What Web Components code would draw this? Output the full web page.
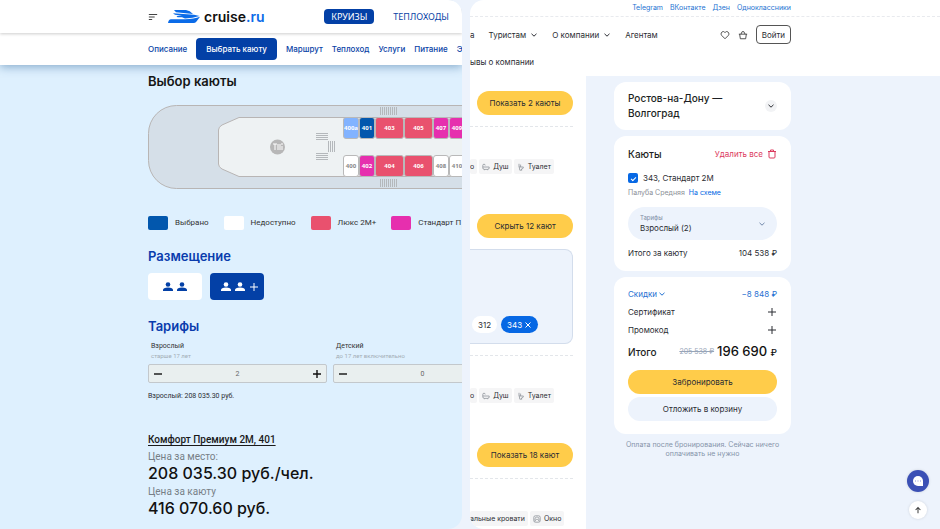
<!DOCTYPE html>
<html lang="ru">
<head>
<meta charset="utf-8">
<meta name="viewport" content="width=device-width, initial-scale=1">
<title>Выбор каюты</title>
<style>
  html { height: 100%; }
  body {
    margin: 0;
    min-height: 100%;
    display: grid;
    grid-template-columns: 462fr 470fr;
    gap: 8px;
    background: #edf3fc;
    font-family: Inter, "Liberation Sans", sans-serif;
    font-size: 8px;
    line-height: 12px;
    color: #2b2d33;
    overflow: hidden;
  }
</style>
</head>
<body>
<cruise-page></cruise-page>
<booking-page></booking-page>

<script>
// every element: open shadow root filled from a template
function define(tag, html) {
  const tpl = document.createElement('template');
  tpl.innerHTML = html;
  customElements.define(tag, class extends HTMLElement {
    constructor() {
      super();
      this.attachShadow({mode:'open'}).appendChild(tpl.content.cloneNode(true));
    }
  });
}

const ICONS = {
  menu: ['0 0 12 8', '<path d="M1 1h10M1 4h7M1 7h4" stroke-width="1.3"/>'],
  down: ['0 0 8 8', '<path d="M1.5 2.8 4 5.2l2.5-2.4"/>'],
  heart: ['0 0 12 12', '<path d="M6 10.500 2 6.500C-.3 4 3.500-.2 6 3 8.500-.2 12.300 4 10 6.500z"/>'],
  basket: ['0 0 12 12', '<path d="M1 5h10M2 5l.8 5.500h6.400L10 5M3.500 5 5 2h2l1.500 3"/>'],
  trash: ['0 0 10 10', '<path d="M1 2.500h8M3.500 2.500V1h3v1.500M2 2.500V8q0 1 1 1h4q1 0 1-1V2.500"/>'],
  plus: ['0 0 10 10', '<path d="M5 1v8M1 5h8"/>'],
  minus: ['0 0 10 10', '<path d="M1 5h8"/>'],
  close: ['0 0 8 8', '<path d="m1.500 1.500 5 5m0-5-5 5"/>'],
  up: ['0 0 10 10', '<path d="M5 9V2M2 5l3-3 3 3" stroke-width="1.3"/>'],
  shower: ['0 0 10 10', '<path d="M1 5h8v1q0 2-2 2H3Q1 8 1 6V3q0-1.500 1.500-1.500T4 3M3 8v1m4-1v1" stroke-width=".9"/>'],
  toilet: ['0 0 10 10', '<path d="M2.500 1v4H8q0 2.500-2.500 2.500L6 9H3.500L3 6 2.500 5M4.500 5V2" stroke-width=".9"/>'],
  window: ['0 0 10 10', '<rect x="1" y="1" width="8" height="8" rx="2" stroke-width=".9"/><path d="M2.500 8V5q0-2.500 2.500-2.500T7.500 5v3M2.500 7 5 5l2.500 2" stroke-width=".8"/>'],
  person: ['0 0 10 10', '<circle cx="5" cy="2.500" r="2.300" fill="currentColor" stroke="none"/><path d="M0 9V8Q0 5.500 5 5.500T10 8v1z" fill="currentColor" stroke="none"/>'],
  chat: ['0 0 12 12', '<path d="M6 1a5 5 0 1 0 0 10h5V6A5 5 0 0 0 6 1z" fill="currentColor" stroke="none"/><path d="M3 6h1m1.500 0h1m1.500 0h1" stroke="#8793dc"/>']
};

class AppIcon extends HTMLElement {
  constructor() {
    super();
    this.attachShadow({mode:'open'});
  }
  connectedCallback() {
    const [box, shape] = ICONS[this.getAttribute('name')];
    this.shadowRoot.innerHTML = `
      <style>
        :host { display: inline-block; width: 10px; height: 10px; flex: none; }
        svg { display: block; width: 100%; height: 100%; stroke-width: var(--stroke, 1); }
      </style>
      <svg viewBox="${box}" fill="none" stroke="currentColor" aria-hidden="true">${shape}</svg>`;
  }
}
customElements.define('app-icon', AppIcon);

/* ---------- cruise page ---------- */

define('cruise-header', `
  <style>
    :host {
      display: flex;
      align-items: center;
      height: 33px;
      padding-left: 148px;
      background: #fff;
      box-shadow: 0 1px 3px #0003;
      position: relative;
      white-space: nowrap;
    }
    button { border: 0; padding: 0; background: none; color: #444; display: flex; }
    button app-icon { width: 10px; height: 8px; }
    .logo {
      display: flex;
      align-items: center;
      gap: 4px;
      margin-left: 10px;
      font: 600 14px/20px Inter, sans-serif;
      color: #111;
      text-decoration: none;
    }
    .logo svg { width: 32px; height: 13px; }
    .logo b { font-weight: 600; color: #0b6be8; }
    nav { display: flex; gap: 12px; margin-left: auto; padding-right: 6px; }
    nav a {
      font: 9px/15px "Noto Sans", sans-serif;
      padding: 0 7px;
      border-radius: 4px;
      color: #0a43a6;
      text-decoration: none;
    }
    nav a.on { background: #0340a6; color: #fff; }
  </style>
  <button type="button" aria-label="Меню"><app-icon name="menu"></app-icon></button>
  <a class="logo" href="#">
    <svg viewBox="0 0 32 13" fill="#0b6be8" aria-hidden="true">
      <path d="M0 13Q.5 9.500 3 9.300H17Q26 9 32 6.800L28.500 11.500Q27.300 13 25.500 13z"/>
      <path d="M6 0H18Q22 .5 25 4L8 2.200z"/>
      <path d="M5 3.200 26 4.700 31.500 6Q25 8.400 17 8.500L14 7.200H9.500L8.500 6 14 5.600 7 4.800z"/>
    </svg>
    <span>cruise<b>.ru</b></span>
  </a>
  <nav><a class="on" href="#">КРУИЗЫ</a><a href="#">ТЕПЛОХОДЫ</a></nav>
`);

define('cruise-nav', `
  <style>
    :host {
      display: flex;
      align-items: center;
      gap: 9px;
      height: 32px;
      padding-left: 148px;
      background: #fff;
      box-shadow: 0 2px 10px #3b6f9f88;
      white-space: nowrap;
    }
    a { color: #0a43a6; text-decoration: none; font: 500 8px/12px Inter, sans-serif; }
    a.on {
      background: #0340a6;
      color: #fff;
      border-radius: 4px;
      padding: 5px 10px;
    }
  </style>
  <a href="#">Описание</a>
  <a class="on" href="#">Выбрать каюту</a>
  <a href="#">Маршрут</a>
  <a href="#">Теплоход</a>
  <a href="#">Услуги</a>
  <a href="#">Питание</a>
  <a href="#">Э</a>
`);

define('deck-plan', `
  <style>
    :host { display: grid; height: 84px; overflow: hidden; }
    svg, .cabins { grid-area: 1 / 1; }
    svg { width: 100%; height: 84px; }
    .cabins {
      display: grid;
      grid-template-columns: 16px 16px 29px 29px 16px 16px;
      grid-template-rows: 22px 22px;
      row-gap: 16px;
      padding: 12px 0 0 195px;
      z-index: 1;
    }
    button {
      border: 1px solid #b9b9b9;
      border-radius: 3px;
      padding: 0;
      background: #fff;
      color: #888;
      font: 700 6px/8px "Noto Sans", sans-serif;
      overflow: hidden;
    }
    .sel { background: #0257ad; color: #fff; }
    .soft { background: #82b3ff; color: #fff; }
    .lux { background: #e9516e; color: #fff; }
    .std { background: #e62fae; color: #fff; }
  </style>
  <svg fill="none" stroke="#b8b5b4" aria-hidden="true">
    <defs>
      <pattern id="v" width="2" height="2" patternUnits="userSpaceOnUse"><path d="M.5 0v2" stroke="#b4b8bb"/></pattern>
      <pattern id="h" width="2" height="2" patternUnits="userSpaceOnUse"><path d="M0 .5h2" stroke="#b4b8bb"/></pattern>
    </defs>
    <rect x=".5" y=".5" width="3000" height="83" rx="28" fill="#d5dfe8"/>
    <path d="M3000 12.500H91L74 20q-3.500 2-3.500 5v34q0 3 3.500 5l17 7.500H3000z" fill="#eef2f3"/>
    <circle cx="129.500" cy="42" r="7.500" fill="#b7b7b7" stroke="none"/>
    <path d="M125 39h4M127 39v6M130 39v6M132 39v6M134 41v4M133 39h2" stroke="#fff"/>
    <g stroke="none">
      <rect x="168" y="27" width="12" height="9" fill="url(#h)"/>
      <rect x="168" y="47" width="12" height="9" fill="url(#h)"/>
      <rect x="180" y="36" width="8" height="11" fill="url(#v)"/>
      <rect x="232" y="2" width="18" height="8" fill="url(#v)"/>
      <rect x="232" y="74" width="18" height="8" fill="url(#v)"/>
    </g>
  </svg>
  <div class="cabins">
    <button class="soft">400a</button><button class="sel">401</button><button class="lux">403</button>
    <button class="lux">405</button><button class="std">407</button><button class="std">409</button>
    <button>400</button><button class="std">402</button><button class="lux">404</button>
    <button class="lux">406</button><button>408</button><button>410</button>
  </div>
`);

define('deck-legend', `
  <style>
    :host { display: block; }
    ul {
      display: flex;
      gap: 15px;
      margin: 0;
      padding: 0;
      list-style: none;
      font: 8px/14px Roboto, sans-serif;
      color: #333;
      white-space: nowrap;
    }
    li { display: flex; gap: 7px; }
    li::before { content: ""; width: 20px; height: 14px; border-radius: 2px; background: var(--c); }
  </style>
  <ul>
    <li style="--c:#0257ad">Выбрано</li>
    <li style="--c:#fff">Недоступно</li>
    <li style="--c:#e9516e">Люкс 2М+</li>
    <li style="--c:#e62fae">Стандарт П</li>
  </ul>
`);

define('cabin-placement', `
  <style>
    :host { display: flex; gap: 8px; }
    button {
      display: flex;
      align-items: center;
      justify-content: center;
      gap: 4px;
      width: 54px;
      height: 27px;
      padding: 0;
      border: 0;
      border-radius: 4px;
      background: #fff;
      color: #0340a6;
    }
    .on { background: #0340a6; color: #fff; padding-left: 6px; }
  </style>
  <button type="button" aria-label="Двое"><app-icon name="person"></app-icon><app-icon name="person"></app-icon></button>
  <button type="button" class="on" aria-label="Двое и дополнительное место"><app-icon name="person"></app-icon><app-icon name="person"></app-icon><app-icon name="plus"></app-icon></button>
`);

class TariffCounter extends HTMLElement {
  constructor() {
    super();
    this.attachShadow({mode:'open'});
  }
  connectedCallback() {
    this.shadowRoot.innerHTML = `
      <style>
        :host { display: block; font: 7px/10px Roboto, sans-serif; color: #333; }
        label { display: block; padding-left: 3px; }
        small { display: block; font-size: 6px; color: #a3adb5; }
        .box {
          display: flex;
          align-items: center;
          box-sizing: border-box;
          height: 19px;
          margin-top: 3px;
          padding: 0 4px;
          background: #e9efef;
          border: 1px solid #c3c8cc;
          border-radius: 2px;
        }
        button { display: flex; padding: 0; border: 0; background: none; color: #111; --stroke: 1.4; }
        input {
          flex: 1;
          min-width: 0;
          padding: 0;
          border: 0;
          background: none;
          text-align: center;
          font: 7px/10px Roboto, sans-serif;
          color: #666;
        }
      </style>
      <label for="n">${this.getAttribute('label')}<small>${this.getAttribute('note')}</small></label>
      <div class="box">
        <button type="button" aria-label="Меньше"><app-icon name="minus"></app-icon></button>
        <input id="n" type="text" inputmode="numeric" value="${this.getAttribute('value')}">
        <button type="button" aria-label="Больше"><app-icon name="plus"></app-icon></button>
      </div>`;
    const input = this.shadowRoot.querySelector('input');
    const [minus, plus] = this.shadowRoot.querySelectorAll('button');
    minus.addEventListener('click', () => { input.value = Math.max(0, Number(input.value) - 1); });
    plus.addEventListener('click', () => { input.value = Number(input.value) + 1; });
  }
}
customElements.define('tariff-counter', TariffCounter);

define('price-block', `
  <style>
    :host { display: block; font: 10px/14px Roboto, sans-serif; color: #777f86; }
    a { color: #1a1a1a; font-weight: 500; text-underline-offset: 2px; }
    p { margin: 3px 0 0; }
    strong { display: block; font: 500 16px/18px Inter, sans-serif; color: #111; }
  </style>
  <a href="#">Комфорт Премиум 2М, 401</a>
  <p>Цена за место:<strong>208 035.30 руб./чел.</strong></p>
  <p>Цена за каюту<strong>416 070.60 руб.</strong></p>
`);

define('cruise-page', `
  <style>
    :host {
      display: block;
      min-width: 0;
      background: #def0fe;
      border-radius: 0 14px 14px 0;
      overflow: hidden;
    }
    main { padding: 8px 0 0 148px; }
    h1, h2 { margin: 0; font: 600 13px/16px Inter, sans-serif; color: #151515; }
    h2 { color: #0a3cad; }
    deck-plan { margin-top: 16px; }
    deck-legend { margin: 27px 0 18px; }
    cabin-placement { margin: 9px 0 18px; }
    .tariffs {
      display: grid;
      grid-template-columns: 179px 179px;
      gap: 6px;
      margin-top: 7px;
    }
    .sum { margin: 7px 0 31px; font: 7px/12px Roboto, sans-serif; }
  </style>
  <cruise-header></cruise-header>
  <cruise-nav></cruise-nav>
  <main>
    <h1>Выбор каюты</h1>
    <deck-plan></deck-plan>
    <deck-legend></deck-legend>
    <h2>Размещение</h2>
    <cabin-placement></cabin-placement>
    <h2>Тарифы</h2>
    <div class="tariffs">
      <tariff-counter label="Взрослый" note="старше 17 лет" value="2"></tariff-counter>
      <tariff-counter label="Детский" note="до 17 лет включительно" value="0"></tariff-counter>
    </div>
    <p class="sum">Взрослый: 208 035.30 руб.</p>
    <price-block></price-block>
  </main>
`);

/* ---------- booking page ---------- */

define('booking-header', `
  <style>
    :host { display: block; height: 76px; background: #fff; white-space: nowrap; }
    a { color: inherit; text-decoration: none; }
    .social {
      display: flex;
      justify-content: flex-end;
      gap: 7px;
      padding: 2px 149px 2px 0;
      border-bottom: 1px dashed #e8eaee;
      font-size: 7px;
      color: #2473d2;
    }
    .menu { display: flex; align-items: center; height: 35px; padding-right: 149px; }
    .menu a { display: flex; align-items: center; gap: 4px; }
    .menu a + a { margin-left: 14px; }
    .menu a app-icon { width: 8px; height: 8px; }
    .tools { display: flex; align-items: center; gap: 8px; margin-left: auto; }
    .icon { display: flex; padding: 0; border: 0; background: none; color: #333; }
    .login {
      height: 19px;
      padding: 0 5px;
      border: 1px solid #555;
      border-radius: 4px;
      background: #fff;
      font: inherit;
      color: inherit;
    }
    .sub { line-height: 20px; }
  </style>
  <div class="social">
    <a href="#">Telegram</a><a href="#">ВКонтакте</a><a href="#">Дзен</a><a href="#">Одноклассники</a>
  </div>
  <div class="menu">
    <a href="#">а</a>
    <a href="#">Туристам <app-icon name="down"></app-icon></a>
    <a href="#">О компании <app-icon name="down"></app-icon></a>
    <a href="#">Агентам</a>
    <div class="tools">
      <button class="icon" aria-label="Избранное"><app-icon name="heart"></app-icon></button>
      <button class="icon" aria-label="Корзина"><app-icon name="basket"></app-icon></button>
      <button class="login">Войти</button>
    </div>
  </div>
  <a class="sub" href="#">ывы о компании</a>
`);

define('pill-button', `
  <style>
    :host { display: block; }
    button {
      width: 100%;
      height: 24px;
      padding: 0;
      border: 0;
      border-radius: 12px;
      background: var(--pill, #ffcc4a);
      font: inherit;
      color: #2b2d33;
      white-space: nowrap;
    }
  </style>
  <button type="button"><slot></slot></button>
`);

define('feature-chip', `
  <style>
    :host {
      display: flex;
      align-items: center;
      gap: 3px;
      height: 15px;
      padding: 0 3px;
      border-radius: 2px;
      background: #f5f5f6;
      font-size: 7px;
      white-space: nowrap;
    }
    :host([cut]) { padding-left: 0; }
  </style>
  <slot></slot>
`);

define('cabin-list', `
  <style>
    :host { display: block; background: #fff; padding: 15px 13px 0 0; }
    pill-button { margin-left: 7px; }
    hr { margin: 11px 0 0; border: 0; border-top: 1px dashed #e3e6ea; }
    .chips { display: flex; gap: 2px; margin-top: 32px; }
    .chips + pill-button { margin-top: 40px; }
    .chips app-icon { width: 8px; height: 8px; color: #858a91; }
    .rooms {
      display: flex;
      align-items: flex-end;
      gap: 4px;
      box-sizing: border-box;
      height: 95px;
      margin-top: 11px;
      padding: 0 0 10px 2px;
      border: 1px solid #d3ddec;
      border-left: 0;
      border-radius: 0 8px 8px 0;
      background: #edf3fc;
    }
    .rooms button {
      display: flex;
      align-items: center;
      gap: 2px;
      height: 17px;
      padding: 0 6px;
      border: 0;
      border-radius: 9px;
      background: #fff;
      font: inherit;
      color: inherit;
    }
    .rooms .on { background: #0768e4; color: #fff; }
    .rooms app-icon { width: 8px; height: 8px; }
  </style>
  <pill-button>Показать 2 каюты</pill-button>
  <hr>
  <div class="chips">
    <feature-chip cut>о</feature-chip>
    <feature-chip><app-icon name="shower"></app-icon>Душ</feature-chip>
    <feature-chip><app-icon name="toilet"></app-icon>Туалет</feature-chip>
  </div>
  <pill-button>Скрыть 12 кают</pill-button>
  <div class="rooms">
    <button type="button">312</button>
    <button type="button" class="on">343 <app-icon name="close"></app-icon></button>
  </div>
  <hr>
  <div class="chips">
    <feature-chip cut>о</feature-chip>
    <feature-chip><app-icon name="shower"></app-icon>Душ</feature-chip>
    <feature-chip><app-icon name="toilet"></app-icon>Туалет</feature-chip>
  </div>
  <pill-button>Показать 18 кают</pill-button>
  <hr>
  <div class="chips">
    <feature-chip cut>альные кровати</feature-chip>
    <feature-chip><app-icon name="window"></app-icon>Окно</feature-chip>
  </div>
`);

define('order-card', `
  <style>
    :host { display: block; padding: 9px 14px; border-radius: 12px; background: #fff; }
  </style>
  <slot></slot>
`);

define('order-summary', `
  <style>
    :host { display: flex; flex-direction: column; gap: 6px; padding: 6px 0 0 28px; width: 177px; }
    h2 { margin: 0; font: 500 10px/15px Inter, sans-serif; color: #1d1f24; }
    .row { display: flex; align-items: center; justify-content: space-between; min-height: 18px; }
    button { display: flex; align-items: center; gap: 4px; padding: 0; border: 0; background: none; font: inherit; color: inherit; }
    .round { justify-content: center; width: 12px; height: 12px; border-radius: 6px; background: #f2f3f5; }
    .round app-icon, .blue app-icon { width: 8px; height: 8px; }
    .remove { color: #dc3b5e; }
    .blue { color: #1f70d2; }
    .blue button { gap: 1px; }
    .pick { display: flex; align-items: center; gap: 5px; margin-top: 8px; line-height: 14px; }
    .pick input {
      appearance: none;
      width: 10px;
      height: 10px;
      margin: 0;
      border-radius: 2px;
      background: #0768e4;
      display: grid;
      place-items: center;
    }
    .pick input:checked::before {
      content: "";
      width: 4px;
      height: 2px;
      border: solid #fff;
      border-width: 0 0 1px 1px;
      transform: rotate(-45deg);
    }
    .deck { margin: 1px 0 7px; font-size: 7px; line-height: 14px; color: #8b8f97; }
    .deck a { margin-left: 2px; color: #0768e4; text-decoration: none; }
    .tariff {
      display: grid;
      grid-template-columns: 1fr 8px;
      align-items: center;
      height: 33px;
      padding: 0 11px 0 12px;
      margin-bottom: 4px;
      border-radius: 17px;
      background: #edf3fc;
    }
    .tariff label { display: block; font-size: 6px; line-height: 9px; color: #7d8ba3; }
    .tariff select {
      display: block;
      appearance: none;
      width: 100%;
      padding: 0;
      border: 0;
      background: none;
      font: 8px/12px Inter, sans-serif;
      color: #2b2d33;
    }
    .tariff app-icon { width: 8px; height: 8px; color: #7288ab; }
    .total { margin: 3px 0 8px; }
    .total del { margin-left: auto; margin-right: 3px; font-size: 7px; color: #98a5b8; }
    .total strong { font: 500 13px/18px Inter, sans-serif; color: #111; }
    .total small { font-size: 9px; }
    pill-button + pill-button { margin-top: 3px; --pill: #edf3fc; }
    .last { padding: 8px 14px 13px; }
    .note { margin: 0; text-align: center; font-size: 7px; line-height: 9px; color: #8694aa; }
  </style>
  <order-card>
    <div class="row"><h2>Ростов-на-Дону —<br>Волгоград</h2>
      <button class="round" aria-label="Развернуть"><app-icon name="down"></app-icon></button></div>
  </order-card>
  <order-card>
    <div class="row"><h2>Каюты</h2><button class="remove">Удалить все <app-icon name="trash"></app-icon></button></div>
    <label class="pick"><input type="checkbox" checked> 343, Стандарт 2М</label>
    <p class="deck">Палуба Средняя <a href="#">На схеме</a></p>
    <div class="tariff">
      <div>
        <label for="tariff">Тарифы</label>
        <select id="tariff"><option>Взрослый (2)</option></select>
      </div>
      <app-icon name="down"></app-icon>
    </div>
    <div class="row"><span>Итого за каюту</span><span>104 538 ₽</span></div>
  </order-card>
  <order-card class="last">
    <div class="row blue"><button>Скидки <app-icon name="down"></app-icon></button><span>−8 848 ₽</span></div>
    <div class="row"><span>Сертификат</span><button aria-label="Добавить сертификат"><app-icon name="plus"></app-icon></button></div>
    <div class="row"><span>Промокод</span><button aria-label="Добавить промокод"><app-icon name="plus"></app-icon></button></div>
    <div class="row total"><h2>Итого</h2><del>205 538 ₽</del><strong>196 690 <small>₽</small></strong></div>
    <pill-button>Забронировать</pill-button>
    <pill-button>Отложить в корзину</pill-button>
  </order-card>
  <p class="note">Оплата после бронирования. Сейчас ничего оплачивать не нужно</p>
`);

define('float-tools', `
  <style>
    :host {
      position: fixed;
      right: 11px;
      bottom: 10px;
      display: flex;
      flex-direction: column;
      align-items: center;
      gap: 9px;
    }
    button {
      display: grid;
      place-items: center;
      width: 18px;
      height: 18px;
      padding: 0;
      border: 0;
      border-radius: 50%;
      background: #fff;
      color: #444;
      box-shadow: 0 0 3px #0002;
    }
    button app-icon { width: 8px; height: 8px; }
    .chat { width: 22px; height: 22px; background: #3b50b5; color: #fff; }
    .chat app-icon { width: 12px; height: 12px; }
  </style>
  <button class="chat" aria-label="Чат"><app-icon name="chat"></app-icon></button>
  <button aria-label="Наверх"><app-icon name="up"></app-icon></button>
`);

define('booking-page', `
  <style>
    :host {
      display: flex;
      flex-direction: column;
      min-width: 0;
      border-radius: 14px 0 0 14px;
      overflow: hidden;
    }
    .cols { flex: 1; display: grid; grid-template-columns: 116px 1fr; }
  </style>
  <booking-header></booking-header>
  <div class="cols">
    <cabin-list></cabin-list>
    <order-summary></order-summary>
  </div>
  <float-tools></float-tools>
`);
</script>
</body>
</html>
